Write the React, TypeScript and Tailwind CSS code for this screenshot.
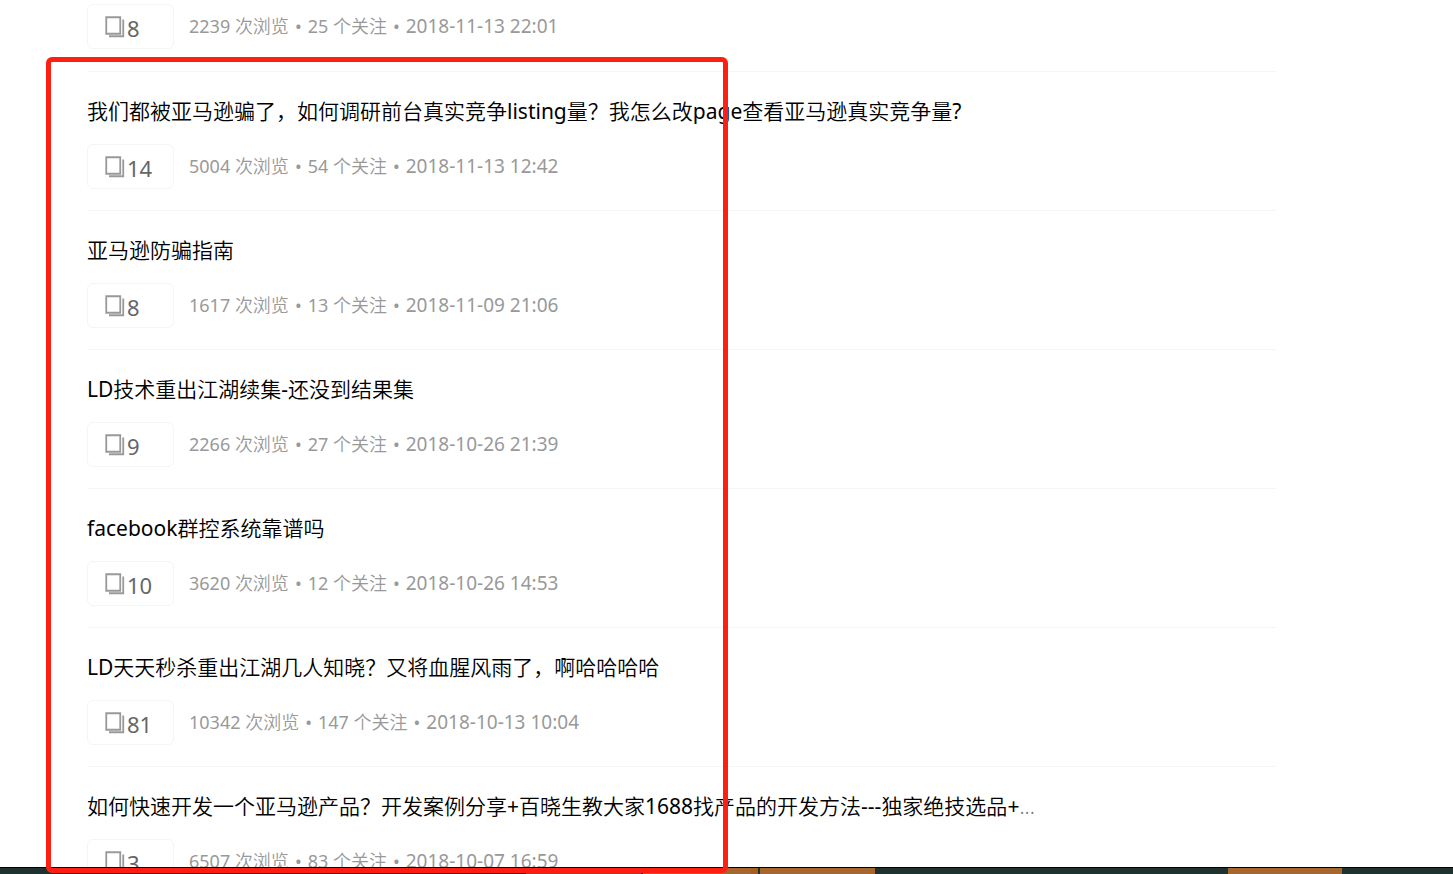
type Post = {
  title?: string;
  truncated?: boolean;
  answers: number;
  views: number;
  follows: number;
  date: string;
};

const posts: Post[] = [
  { answers: 8, views: 2239, follows: 25, date: "2018-11-13 22:01" },
  { title: "我们都被亚马逊骗了，如何调研前台真实竞争listing量？我怎么改page查看亚马逊真实竞争量?", answers: 14, views: 5004, follows: 54, date: "2018-11-13 12:42" },
  { title: "亚马逊防骗指南", answers: 8, views: 1617, follows: 13, date: "2018-11-09 21:06" },
  { title: "LD技术重出江湖续集-还没到结果集", answers: 9, views: 2266, follows: 27, date: "2018-10-26 21:39" },
  { title: "facebook群控系统靠谱吗", answers: 10, views: 3620, follows: 12, date: "2018-10-26 14:53" },
  { title: "LD天天秒杀重出江湖几人知晓？又将血腥风雨了，啊哈哈哈哈", answers: 81, views: 10342, follows: 147, date: "2018-10-13 10:04" },
  { title: "如何快速开发一个亚马逊产品？开发案例分享+百晓生教大家1688找产品的开发方法---独家绝技选品+", truncated: true, answers: 3, views: 6507, follows: 83, date: "2018-10-07 16:59" },
];

function PagesIcon() {
  return (
    <svg width="20" height="22" viewBox="0 0 20 22" fill="none" stroke="#999" strokeWidth="1.8" aria-hidden="true">
      <path d="M1.25 1.25H15.25V17.75H1.25Z" />
      <path d="M18.25 3.5V20.25H4" />
    </svg>
  );
}

// Sets Latin runs in the regular weight inside light Chinese text.
function MixedText({ text }: { text: string }) {
  return text.split(/([\x20-\x7e]+)/).map((run, i) =>
    i % 2 === 1 ? (
      <span key={i} className="font-normal">{run}</span>
    ) : (
      run
    ),
  );
}

function PostRow({ post }: { post: Post }) {
  return (
    <li className={post.title ? "border-t border-[#f5f5f5] pt-[23px] pb-[21px]" : "pt-1 pb-[22px]"}>
      {post.title && (
        <h2 className="mb-[17px] text-[21px] leading-8 font-[350] text-black">
          <a href="#">
            <MixedText text={post.title} />
          </a>
          {post.truncated && <span className="text-[#777]">...</span>}
        </h2>
      )}
      <div className="flex items-center gap-[15px]">
        <button type="button" className="flex h-[45px] w-[87px] items-center gap-0.5 rounded-md border border-[#f5f5f5] pl-[17px] text-[22px] leading-8 text-[#666]">
          <PagesIcon />
          <span className="pt-0.5">{post.answers}</span>
        </button>
        <p className="flex items-center gap-1.5 text-[18px] leading-[27px] font-[350] text-[#999]">
          <span><MixedText text={`${post.views} 次浏览`} /></span>
          <span className="font-normal">•</span>
          <span><MixedText text={`${post.follows} 个关注`} /></span>
          <span className="font-normal">•</span>
          <time className="text-[19px] font-normal">{post.date}</time>
        </p>
      </div>
    </li>
  );
}

export default function App() {
  return (
    <div className="relative flex h-screen flex-col overflow-hidden bg-white font-['Noto_Sans','Noto_Sans_CJK_SC',sans-serif]">
      <main className="min-h-0 flex-1 overflow-hidden">
        <ul className="pr-[177px] pl-[87px]">
          {posts.map((post) => (
            <PostRow key={post.date} post={post} />
          ))}
        </ul>
      </main>
      <footer className="flex h-[7px] shrink-0 border-t border-black bg-[#1f3230]">
        <div className="ml-[526px] w-[115px] bg-[#5a5a58]" />
        <div className="ml-0.5 w-[108px] bg-[#a5672d]" />
        <div className="w-[7px] bg-[#a65f20]" />
        <div className="ml-0.5 w-[115px] bg-[#a5672d]" />
        <div className="ml-[353px] w-[114px] bg-[#a5672d]" />
      </footer>
      <div className="pointer-events-none absolute top-[57px] bottom-px left-[46px] w-[682px] rounded-md border-[5px] border-[#ff1f12]" />
    </div>
  );
}
